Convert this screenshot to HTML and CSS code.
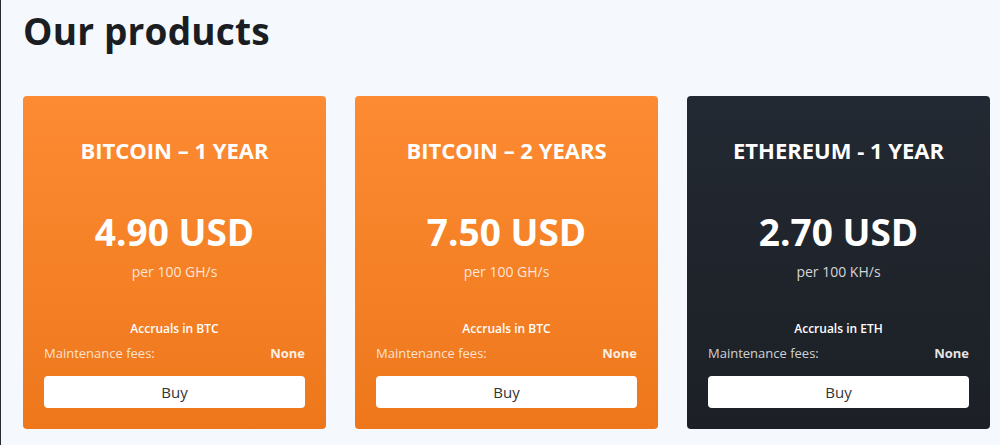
FILE: index.html
```html
<!DOCTYPE html>
<html>
<head>
<meta charset="utf-8">
<link rel="stylesheet" href="styles.css">
</head>
<body>
<main class="page">
  <h1 class="heading">Our products</h1>
  <div class="cards">
    <section class="card card-orange">
      <h2 class="card-title">BITCOIN – 1 YEAR</h2>
      <div class="price">4.90 USD</div>
      <div class="unit">per 100 GH/s</div>
      <div class="accruals">Accruals in BTC</div>
      <div class="fees"><span>Maintenance fees:</span><span class="fees-val">None</span></div>
      <button class="buy">Buy</button>
    </section>
    <section class="card card-orange">
      <h2 class="card-title">BITCOIN – 2 YEARS</h2>
      <div class="price">7.50 USD</div>
      <div class="unit">per 100 GH/s</div>
      <div class="accruals">Accruals in BTC</div>
      <div class="fees"><span>Maintenance fees:</span><span class="fees-val">None</span></div>
      <button class="buy">Buy</button>
    </section>
    <section class="card card-dark">
      <h2 class="card-title">ETHEREUM - 1 YEAR</h2>
      <div class="price">2.70 USD</div>
      <div class="unit">per 100 KH/s</div>
      <div class="accruals">Accruals in ETH</div>
      <div class="fees"><span>Maintenance fees:</span><span class="fees-val">None</span></div>
      <button class="buy">Buy</button>
    </section>
  </div>
</main>
</body>
</html>
```
FILE: styles.css
```css
html, body {
  margin: 0;
  padding: 0;
  background: #f5f8fc;
  font-family: "Open Sans", "Liberation Sans", sans-serif;
}
.page {
  border-left: 1px solid #2a2a2a;
  min-height: 445px;
  box-sizing: border-box;
  padding: 0 10px 0 22px;
}
.heading {
  margin: 0;
  padding-top: 5px;
  font-size: 37px;
  line-height: 52px;
  font-weight: 700;
  color: #1a1d22;
  letter-spacing: 0.2px;
}
.cards {
  display: flex;
  gap: 29px;
  margin-top: 39px;
}
.card {
  width: 303px;
  height: 333px;
  box-sizing: border-box;
  border-radius: 4px;
  padding: 0 21px;
  display: flex;
  flex-direction: column;
  align-items: center;
  color: #fff;
}
.card-orange {
  background: linear-gradient(180deg, #fd8b33 0%, #ee771b 100%);
}
.card-dark {
  background: linear-gradient(180deg, #232932 0%, #1c2026 100%);
}
.card-title {
  margin: 0;
  margin-top: 38px;
  font-size: 22px;
  line-height: 32px;
  font-weight: 700;
}
.price {
  margin-top: 42px;
  font-size: 37px;
  line-height: 48px;
  font-weight: 700;
}
.unit {
  margin-top: 6px;
  font-size: 14px;
  line-height: 20px;
  color: rgba(255,255,255,0.82);
}
.accruals {
  margin-top: 38px;
  font-size: 12px;
  line-height: 18px;
  font-weight: 600;
}
.fees {
  margin-top: 6px;
  align-self: stretch;
  display: flex;
  justify-content: space-between;
  font-size: 13px;
  line-height: 18px;
  color: rgba(255,255,255,0.8);
}
.fees-val {
  font-weight: 700;
  color: rgba(255,255,255,0.9);
}
.buy {
  margin-top: 14px;
  align-self: stretch;
  height: 32px;
  border: none;
  border-radius: 4px;
  background: #fff;
  color: #333;
  font-family: "Open Sans", "Liberation Sans", sans-serif;
  font-size: 15px;
  cursor: pointer;
}
```
